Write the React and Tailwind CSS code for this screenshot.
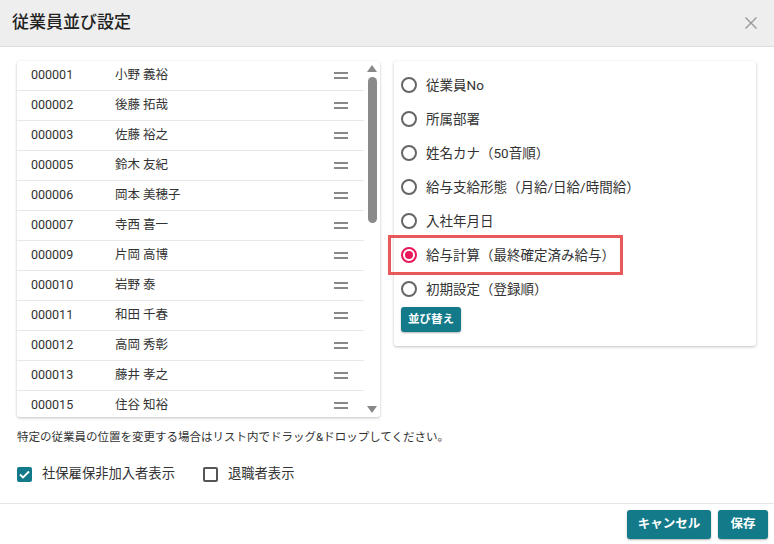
import { useState } from 'react';

const employees = [
  ['000001', '小野 義裕'],
  ['000002', '後藤 拓哉'],
  ['000003', '佐藤 裕之'],
  ['000005', '鈴木 友紀'],
  ['000006', '岡本 美穂子'],
  ['000007', '寺西 喜一'],
  ['000009', '片岡 高博'],
  ['000010', '岩野 泰'],
  ['000011', '和田 千春'],
  ['000012', '高岡 秀彰'],
  ['000013', '藤井 孝之'],
  ['000015', '住谷 知裕'],
];

const sortOptions = [
  '従業員No',
  '所属部署',
  '姓名カナ（50音順）',
  '給与支給形態（月給/日給/時間給）',
  '入社年月日',
  '給与計算（最終確定済み給与）',
  '初期設定（登録順）',
];

function Radio({ checked }) {
  return (
    <span
      className={`w-[16px] h-[16px] rounded-full border-2 flex items-center justify-center shrink-0 ${
        checked ? 'border-[#e8185a]' : 'border-[#666]'
      }`}
    >
      {checked && <span className="w-[8px] h-[8px] rounded-full bg-[#e8185a]" />}
    </span>
  );
}

export default function App() {
  const [selected, setSelected] = useState(5);

  return (
    <div
      className="w-[774px] h-[544px] bg-white text-[#333] flex flex-col overflow-hidden"
      style={{ fontFamily: 'Roboto, "Noto Sans CJK JP", sans-serif' }}
    >
      {/* Header */}
      <div className="h-[47px] bg-[#eeeeee] border-b border-[#dddddd] flex items-center justify-between pl-[12px] pr-[16px] shrink-0">
        <h2 className="text-[17px] font-medium text-[#222]">従業員並び設定</h2>
        <svg width="14" height="14" viewBox="0 0 14 14" className="text-[#999]">
          <path d="M1.5 1.5l11 11M12.5 1.5l-11 11" stroke="currentColor" strokeWidth="1.4" />
        </svg>
      </div>

      {/* Body */}
      <div className="flex-1 px-[17px] pt-[14px]">
        <div className="flex gap-[14px] items-start">
          {/* Employee list */}
          <div className="w-[363px] h-[356px] bg-white rounded-[3px] shadow-[0_1px_3px_rgba(0,0,0,0.25)] flex overflow-hidden">
            <ul className="flex-1">
              {employees.map(([id, name]) => (
                <li
                  key={id}
                  className="h-[30px] border-b border-[#e8e8e8] flex items-center pl-[14px] pr-[16px] text-[12.5px] text-[#333]"
                >
                  <span className="w-[84px]">{id}</span>
                  <span className="flex-1">{name}</span>
                  <span className="flex flex-col gap-[3px]">
                    <span className="block w-[14px] h-[2px] bg-[#888]" />
                    <span className="block w-[14px] h-[2px] bg-[#888]" />
                  </span>
                </li>
              ))}
            </ul>
            <div className="w-[16px] flex flex-col items-center pt-[4px] pb-[4px]">
              <svg width="10" height="7" viewBox="0 0 10 7">
                <path d="M5 0L10 7H0z" fill="#888" />
              </svg>
              <div className="w-[9px] h-[146px] rounded-full bg-[#8a8a8a] mt-[5px]" />
              <div className="flex-1" />
              <svg width="10" height="7" viewBox="0 0 10 7">
                <path d="M0 0h10L5 7z" fill="#888" />
              </svg>
            </div>
          </div>

          {/* Sort options */}
          <div className="w-[362px] bg-white rounded-[3px] shadow-[0_1px_3px_rgba(0,0,0,0.25)] pt-[7px] pb-[14px] px-[7px]">
            {sortOptions.map((label, i) => (
              <label
                key={label}
                onClick={() => setSelected(i)}
                className={`h-[34px] flex items-center gap-[9px] text-[13.5px] text-[#333] cursor-pointer ${
                  i === 5
                    ? 'outline-[3px] outline outline-[#e85a5a] -mx-[10px] px-[10px] w-[229px]'
                    : ''
                }`}
              >
                <Radio checked={selected === i} />
                <span>{label}</span>
              </label>
            ))}
            <button className="h-[25px] px-[7px] bg-[#137a8a] text-white text-[11.5px] font-bold rounded-[3px] shadow-[0_1px_2px_rgba(0,0,0,0.3)]">
              並び替え
            </button>
          </div>
        </div>

        <p className="mt-[12px] text-[11.5px] text-[#333]">
          特定の従業員の位置を変更する場合はリスト内でドラッグ&amp;ドロップしてください。
        </p>

        <div className="mt-[18px] flex items-center text-[13.3px] text-[#333]">
          <span className="w-[15px] h-[15px] rounded-[2px] bg-[#137a8a] flex items-center justify-center">
            <svg width="11" height="9" viewBox="0 0 11 9">
              <path d="M1 4.5l3 3 6-6" stroke="#fff" strokeWidth="1.8" fill="none" />
            </svg>
          </span>
          <span className="ml-[10px]">社保雇保非加入者表示</span>
          <span className="ml-[28px] w-[15px] h-[15px] rounded-[2px] border-2 border-[#555]" />
          <span className="ml-[10px]">退職者表示</span>
        </div>
      </div>

      {/* Footer */}
      <div className="h-[41px] border-t border-[#e6e6e6] flex items-center justify-end gap-[7px] pr-[6px] shrink-0">
        <button className="h-[29px] w-[84px] bg-[#137a8a] text-white text-[12.5px] font-bold rounded-[3px] shadow-[0_1px_2px_rgba(0,0,0,0.3)]">
          キャンセル
        </button>
        <button className="h-[29px] w-[50px] bg-[#137a8a] text-white text-[12.5px] font-bold rounded-[3px] shadow-[0_1px_2px_rgba(0,0,0,0.3)]">
          保存
        </button>
      </div>
    </div>
  );
}
